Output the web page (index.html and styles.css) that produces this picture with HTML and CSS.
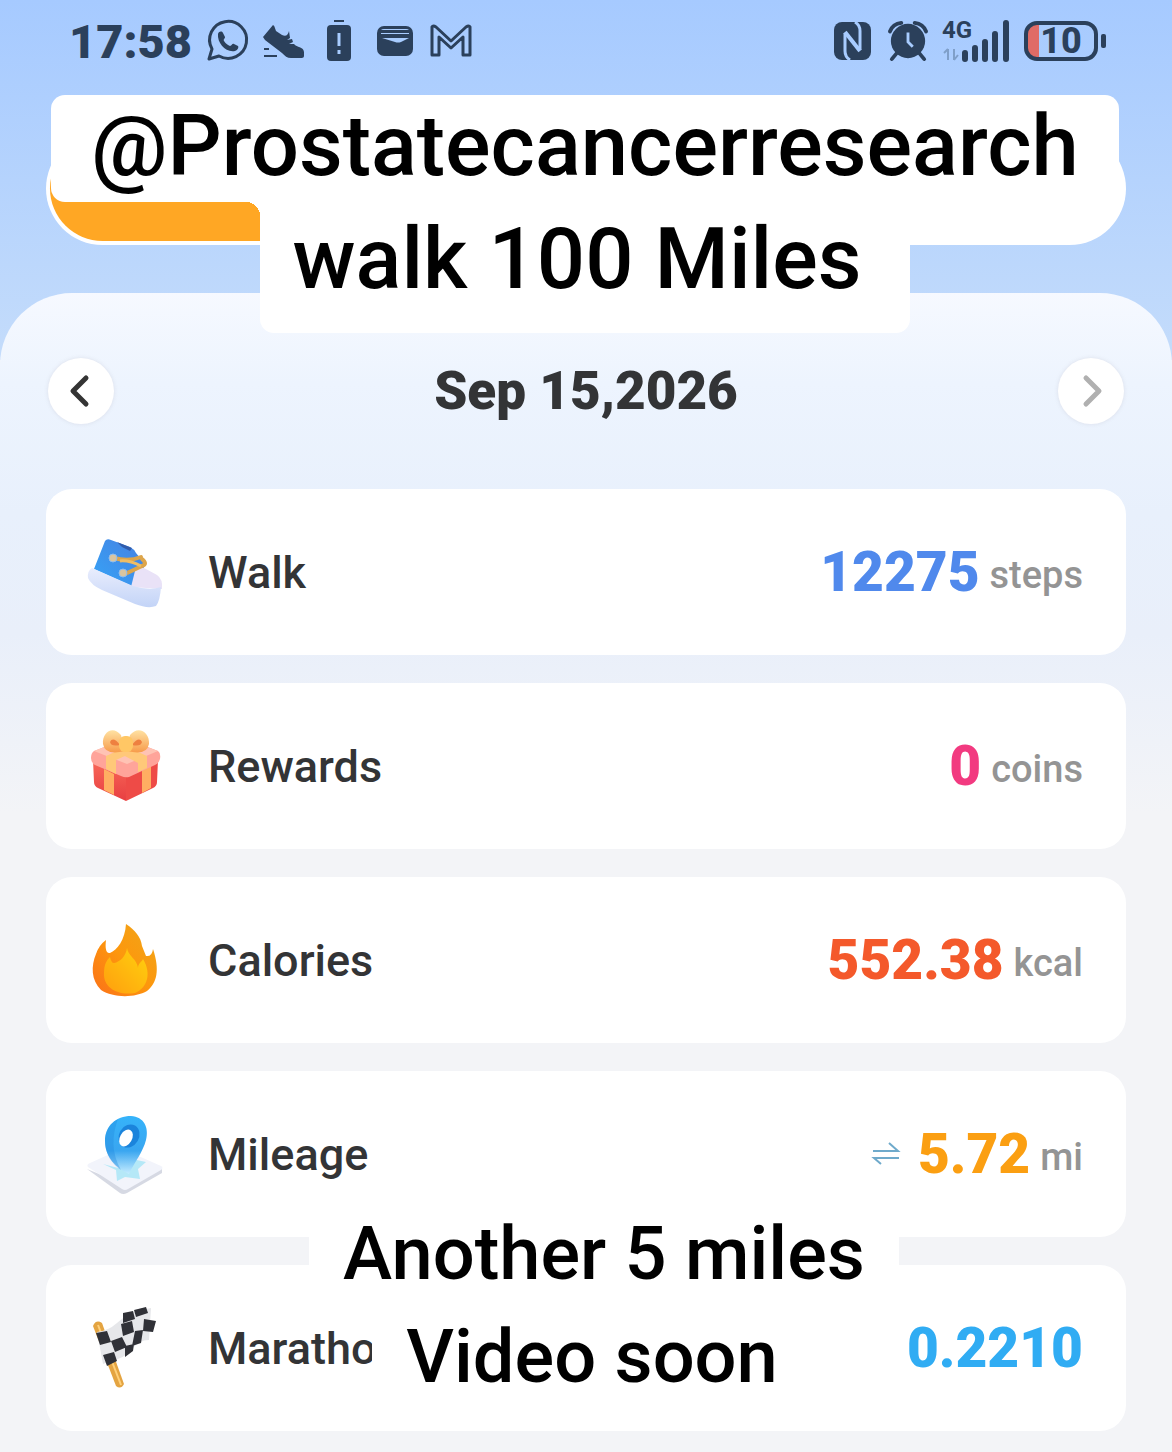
FILE: index.html
```html
<!DOCTYPE html>
<html lang="en">
<head>
  <meta charset="UTF-8" />
  <meta name="viewport" content="width=device-width, initial-scale=1.0">
  <title>Step Counter</title>
  <link rel="stylesheet" href="styles.css">
</head>
<body>
  <header class="status-bar">
    <div class="status-left">
      <span class="clock">17:58</span>
      <svg class="status-icon" viewBox="0 0 42 42">
        <path d="M3 39l3-10A18.500 18.500 0 1 1 13 36z" fill="none" stroke="currentColor" stroke-width="3" stroke-linejoin="round"/>
        <path d="M12 14c1-3 4-3 5-1l2 4c0 2-2 2-1 4 2 3 4 4 6 5 2 0 2-3 4-2l4 2c1 1 0 4-3 5-9 2-18-8-17-17z" fill="currentColor"/>
      </svg>
      <svg class="status-icon" viewBox="0 0 42 42">
        <path d="M1 17L11 5c2 1 2 4 3 6l6 4c4 2 6 0 7-4l1 7-3 2 5-1 1 3-4 2 5 0c3 4 9 2 10 8v4c0 2-2 2-4 2h-9c-4 0-6-2-9-5L3 20z" fill="currentColor"/>
        <path d="M2 29h5M2 36h13" stroke="currentColor" stroke-width="2"/>
      </svg>
      <svg class="status-icon" viewBox="0 0 42 42">
        <path d="M16 1h10" stroke="currentColor" stroke-width="2"/>
        <rect x="9" y="5" width="24" height="36" rx="4" fill="currentColor"/>
        <path d="M21 13v13M21 30v4" stroke="#a8ccff" stroke-width="3"/>
      </svg>
      <svg class="status-icon" viewBox="0 0 42 42">
        <rect x="3" y="6" width="36" height="30" rx="7" fill="currentColor"/>
        <path d="M7 10q1-1 3-1h22q2 0 3 1zM7 13h28v1H7zM8 18h27l-8 4q-3 1-6 0z" fill="#a8ccff"/>
      </svg>
      <svg class="status-icon" viewBox="0 0 42 42">
        <path d="M2 35V7q1-2 4 0l15 14L36 7q3-2 4 0v28h-7V17L21 28 9 17v18z" fill="none" stroke="currentColor" stroke-width="3" stroke-linejoin="round"/>
      </svg>
    </div>
    <div class="status-right">
      <svg class="status-icon" viewBox="0 0 42 42">
        <rect x="2" y="2" width="37" height="38" rx="8" fill="currentColor"/>
        <path d="M13 13v18q0 6 5 9M28 30V11q0-6-5-9" fill="none" stroke="#a8ccff" stroke-width="3"/>
        <path d="M13 12l15 19" fill="none" stroke="#a8ccff" stroke-width="4"/>
      </svg>
      <svg class="status-icon alarm" viewBox="0 0 42 42">
        <circle cx="21" cy="21" r="18" fill="currentColor"/>
        <path d="M2 11q3-8 12-9M28 2q9 1 12 9M9 34l-5 6M33 34l5 6" fill="none" stroke="currentColor" stroke-width="4" stroke-linecap="round"/>
        <path d="M21 12v10l5 5" fill="none" stroke="#a8ccff" stroke-width="3"/>
      </svg>
      <div class="signal">
        <span>4G</span>
        <svg viewBox="0 0 68 42">
          <path d="M6 29v11M6 29l-4 4M12 29v11M12 40l4-5" fill="none" stroke="#7f9fc9" stroke-width="2"/>
          <path d="M23 33v6M33 28v11M43 22v17M53 14v25M64 3v36" stroke="currentColor" stroke-width="6" stroke-linecap="round"/>
        </svg>
      </div>
      <div class="battery"><span>10</span></div>
    </div>
  </header>

  <section class="goal">
    <div class="progress"><div class="progress-fill"></div></div>
    <div class="caption caption-top">
      <span class="caption-line">@Prostatecancerresearch</span>
      <span class="caption-line second">walk 100 Miles</span>
    </div>
  </section>

  <main class="panel">
    <nav class="date-nav">
      <button class="nav-btn" aria-label="Previous day">
        <svg viewBox="0 0 66 66"><path d="M38 20L25 33l13 13" /></svg>
      </button>
      <h1>Sep 15,2026</h1>
      <button class="nav-btn next" aria-label="Next day">
        <svg viewBox="0 0 66 66"><path d="M28 20l13 13-13 13" /></svg>
      </button>
    </nav>

    <ul class="stats">
      <li class="card">
        <svg class="card-icon" viewBox="0 0 80 80">
          <defs>
            <linearGradient id="shoe" x1="0" y1="1" x2="1" y2="0">
              <stop offset="0" stop-color="#35a5f8"/><stop offset="1" stop-color="#477fe0"/>
            </linearGradient>
            <linearGradient id="sole" x1="0" y1="0" x2="0" y2="1">
              <stop offset="0" stop-color="#e9edfd"/><stop offset="1" stop-color="#c3d4f7"/>
            </linearGradient>
          </defs>
          <path d="M20 9q2-3 6-1l19 7q4 2 6 6l9 11-9 24-42-19z" fill="url(#shoe)"/>
          <path d="M50 39q6-6 11-2l11 6q6 4 5 14l-31-2z" fill="#e9e2f7"/>
          <path d="M7 36q-5 3-4 10 3 7 14 12l33 14q13 5 21 2 4-5 5-19-11 4-28-1z" fill="url(#sole)"/>
          <path d="M29 26q15 4 27-1M57 27q6 5 0 7L40 42" fill="none" stroke="#dda54b" stroke-width="4" stroke-linecap="round"/>
          <path d="M35 29q9-1 21 5" fill="none" stroke="#efbd65" stroke-width="3"/>
          <circle cx="28" cy="26" r="4" fill="#d9c5a0" stroke="#8cbdf2"/>
          <circle cx="38" cy="41" r="4" fill="#d9c5a0" stroke="#8cbdf2"/>
          <path d="M32 10l15 6-2 3-8-4z" fill="#315cab"/>
        </svg>
        <span class="label">Walk</span>
        <span class="value blue">12275</span>
        <span class="unit">steps</span>
      </li>
      <li class="card">
        <svg class="card-icon" viewBox="0 0 80 80">
          <defs>
            <linearGradient id="box" x1="0" y1="0" x2="0" y2="1">
              <stop offset="0" stop-color="#f86858"/><stop offset="1" stop-color="#e83f42"/>
            </linearGradient>
            <linearGradient id="bow" x1="0" y1="0" x2="0" y2="1">
              <stop offset="0" stop-color="#ffe2a3"/><stop offset="1" stop-color="#f79b4a"/>
            </linearGradient>
          </defs>
          <path d="M8 34l33 15v26L13 62q-4-2-4-6z" fill="url(#box)"/>
          <path d="M41 49l32-15-1 22q0 4-4 6L41 75z" fill="#ee4b47"/>
          <path d="M19 43l10 5v21l-10-5zM57 44l9-4v22l-9 5z" fill="#ffae62"/>
          <path d="M9 25l28-11q4-1 8 0l28 11q3 2 2 8-1 4-5 6L44 51q-4 1-8-1L10 39q-4-2-4-7 0-5 3-7z" fill="#ffa49a"/>
          <path d="M9 25l31-12 33 12-31 13z" fill="#ffc3b4"/>
          <path d="M21 20l10-4 31 14v12l-9 4v-9zM52 16l10 4-31 14v14l-10-5V30z" fill="#ffc879"/>
          <path d="M40 25q-20 5-22-7C17 6 28-1 36 9zM42 25q20 5 22-7C65 6 53-1 45 9z" fill="url(#bow)"/>
          <path d="M35 19q-9 2-10-3 3-6 10 3zM47 19q9 2 10-3-3-6-10 3z" fill="#ee8040"/>
          <rect x="34" y="10" width="14" height="16" rx="6" fill="#ffc765"/>
        </svg>
        <span class="label">Rewards</span>
        <span class="value pink">0</span>
        <span class="unit">coins</span>
      </li>
      <li class="card">
        <svg class="card-icon" viewBox="0 0 80 80">
          <defs>
            <linearGradient id="flame" x1="0" y1="1" x2="1" y2="0">
              <stop offset="0" stop-color="#fb7019"/><stop offset="0.500" stop-color="#fd970d"/><stop offset="1" stop-color="#efa71a"/>
            </linearGradient>
            <linearGradient id="flame-inner" x1="0" y1="1" x2="1" y2="0">
              <stop offset="0" stop-color="#ff9e0e"/><stop offset="1" stop-color="#ffd20e"/>
            </linearGradient>
          </defs>
          <path d="M41 4c9 6 15 13 16 22l4 10q6 1 7-7c7 21 4 34-6 42-12 7-34 7-46-1C6 60 6 46 11 34q3-9 10-14c-1 8 0 14 4 13 7-3 15-13 16-29z" fill="url(#flame)"/>
          <path d="M42 28c1 8 10 11 11 20 0-5 4-6 5-9 9 15 4 29-8 34-18 3-32-6-31-20 0-8 2-12 6-16 1 4 2 6 4 6 6-1 12-7 13-15z" fill="url(#flame-inner)"/>
        </svg>
        <span class="label">Calories</span>
        <span class="value red">552.38</span>
        <span class="unit">kcal</span>
      </li>
      <li class="card">
        <svg class="card-icon" viewBox="0 0 80 80">
          <defs>
            <linearGradient id="pin" x1="0" y1="0" x2="0" y2="1">
              <stop offset="0" stop-color="#35b3fa"/><stop offset="0.600" stop-color="#3aa6f0"/><stop offset="1" stop-color="#c6edff"/>
            </linearGradient>
          </defs>
          <path d="M2 55l33 24q3 2 7 0l35-20v-5L43 72z" fill="#d6d9e3"/>
          <path d="M3 53q-2-2 2-4l29-13q3-1 6 0l36 16q3 2 0 4L43 75q-3 2-6 0z" fill="#f2f4fb"/>
          <path d="M18 50l15 4 14-9 14 3-8 7 2 10-15-2-8 4-1-11z" fill="#b5e8f7"/>
          <path d="M44 60C32 54 20 44 20 27 20 12 31 2 46 2c13 1 18 11 15 24-3 12-12 23-17 34z" fill="url(#pin)"/>
          <path d="M36 56C27 50 20 40 20 27 20 17 25 9 33 5c-6 16-7 34 3 51z" fill="#2086dc" opacity="0.350"/>
          <ellipse cx="44" cy="22" rx="10" ry="12" transform="rotate(30 44 22)" fill="#1b84dc"/>
          <ellipse cx="41" cy="24" rx="6" ry="9" transform="rotate(30 41 24)" fill="#fff"/>
        </svg>
        <span class="label">Mileage</span>
        <button class="swap" aria-label="Switch distance unit">
          <svg viewBox="0 0 28 28"><path d="M1 11h25l-9-8M27 18H2l7 6" /></svg>
        </button>
        <span class="value orange">5.72</span>
        <span class="unit">mi</span>
      </li>
      <li class="card">
        <svg class="card-icon" viewBox="0 0 80 80">
          <path d="M8 18q3-7 9-3l22 61q-3 6-8 2z" fill="#e4a441"/>
          <path d="M13 17l23 60" stroke="#ffd07a" stroke-width="2"/>
          <path d="M12 24q11-1 20-9T50 3l16-3-2 32q-10 0-17 9t-21 12l-8 3z" fill="#e6e7ea"/>
          <path d="M11 25l11-2 4 11-11 3zM36 16l11-3 2 11-11 4zM38 5l10-2 2 8-12 4zM49 2l12-3 2 6-12 4zM59 11l12 2-3 11-10-1zM26 33l11-4 5 10-12 5zM50 23l8-1-2 13-9 3zM18 47l11-3 3 9-10 5zM40 38l9-2-1 7-8 6z" fill="#303137"/>
        </svg>
        <span class="label">Marathon</span>
        <span class="value sky">0.2210</span>
        <div class="caption caption-bottom">
          <span class="caption-line">Another 5 miles</span>
          <span class="caption-line second">Video soon</span>
        </div>
      </li>
    </ul>
  </main>
</body>
</html>
```
FILE: styles.css
```css
:root {
  --ink: #2b405b;
  --text: #333436;
  --muted: #949494;
  --card: #fff;
}

* {
  box-sizing: border-box;
}

body {
  margin: 0;
  background: #f3f4f7 linear-gradient(#a6caff, #c4dcfb 360px, #f3f4f7 360px) no-repeat;
  color: var(--text);
  font-family: Roboto, "Liberation Sans", sans-serif;
}

svg {
  display: block;
  overflow: visible;
}

/* status bar */
.status-bar {
  display: flex;
  justify-content: space-between;
  align-items: center;
  height: 82px;
  padding: 0 66px 0 69px;
  color: var(--ink);
}

.status-left,
.status-right {
  display: flex;
  align-items: center;
  gap: 14px;
}

.clock {
  font-size: 47px;
  font-weight: 900;
}

.status-icon {
  width: 42px;
  height: 42px;
}

.alarm {
  width: 40px;
}

.signal {
  position: relative;
  width: 68px;
}

.signal span {
  position: absolute;
  top: 0;
  left: 0;
  font-size: 24px;
  line-height: 20px;
  font-weight: 700;
}

.battery {
  position: relative;
  width: 74px;
  height: 40px;
  margin-right: 8px;
  border: 4px solid var(--ink);
  border-radius: 13px;
  background: linear-gradient(to right, #e06b66 11px, transparent 11px);
  font-size: 36px;
  line-height: 33px;
  font-weight: 800;
  text-align: center;
}

.battery::after {
  content: "";
  position: absolute;
  right: -12px;
  top: 9px;
  width: 5px;
  height: 14px;
  border-radius: 2px;
  background: var(--ink);
}

/* goal */
.goal {
  position: relative;
  z-index: 1;
  padding: 50px 46px 48px;
}

.progress {
  height: 113px;
  padding: 4px;
  border-radius: 57px;
  background: var(--card);
}

.progress-fill {
  width: 30%;
  height: 100%;
  border-radius: 53px 0 0 53px;
  background: #ffa724;
}

.caption {
  position: absolute;
  left: 0;
  right: 0;
  display: flex;
  flex-direction: column;
  align-items: center;
  color: #000;
  font-weight: 500;
  white-space: nowrap;
}

.caption-line {
  padding: 0 40px;
  border-radius: 14px;
  background: var(--card);
}

.caption-top {
  top: 13px;
  padding-right: 2px;
  font-size: 85px;
  line-height: 103px;
}

.caption-top .caption-line {
  padding-bottom: 4px;
}

.caption-top .second {
  position: relative;
  padding: 6px 48px 22px 32px;
  border-radius: 0 0 14px 14px;
}

/* rounded joint where the two caption lines meet */
.caption-top .second::before {
  content: "";
  position: absolute;
  top: 0;
  right: 100%;
  width: 14px;
  height: 14px;
  background: radial-gradient(circle at bottom left, transparent 14px, var(--card) 14px);
}

.caption-bottom {
  top: -63px;
  padding-left: 36px;
  font-size: 74px;
  line-height: 103px;
}

.caption-bottom .caption-line {
  padding: 0 34px;
}

.caption-bottom .second {
  padding-right: 58px;
}

/* panel */
.panel {
  padding: 64px 46px 20px;
  border-radius: 72px 72px 0 0;
  background: linear-gradient(#f6f9ff, #edf4fe 90px, #e8f0fc 220px, #e9effa 340px, #f3f4f7 520px);
}

.date-nav {
  display: flex;
  justify-content: space-between;
  align-items: center;
  padding: 0 2px 64px;
}

.date-nav h1 {
  margin: 0;
  font-size: 53px;
  line-height: 68px;
  font-weight: 900;
}

.nav-btn {
  width: 66px;
  height: 66px;
  padding: 0;
  border: none;
  border-radius: 50%;
  background: var(--card);
  box-shadow: 0 0 4px rgba(120, 110, 120, 0.15);
  color: #343434;
  cursor: pointer;
}

.nav-btn.next {
  color: #b0b0b0;
}

.nav-btn path {
  fill: none;
  stroke: currentColor;
  stroke-width: 5;
  stroke-linecap: round;
  stroke-linejoin: round;
}

.stats {
  display: flex;
  flex-direction: column;
  gap: 28px;
  margin: 0;
  padding: 0;
  list-style: none;
}

.card {
  position: relative;
  display: flex;
  align-items: center;
  height: 166px;
  padding: 0 43px 0 39px;
  border-radius: 26px;
  background: var(--card);
}

.card-icon {
  width: 80px;
  height: 80px;
  margin-right: 43px;
}

.label {
  flex: 1;
  font-size: 45px;
  font-weight: 500;
}

.value {
  font-size: 55px;
  font-weight: 900;
}

.unit {
  margin: 6px 0 0 10px;
  color: var(--muted);
  font-size: 38px;
  font-weight: 500;
}

.swap {
  width: 28px;
  margin-right: 18px;
  padding: 0;
  border: none;
  background: none;
  cursor: pointer;
}

.swap path {
  fill: none;
  stroke: #6faacb;
  stroke-width: 2;
}

.blue { color: #5089ec; }
.pink { color: #f23a80; }
.red { color: #f4592b; }
.orange { color: #fb9f12; }
.sky { color: #30acf3; }
```
